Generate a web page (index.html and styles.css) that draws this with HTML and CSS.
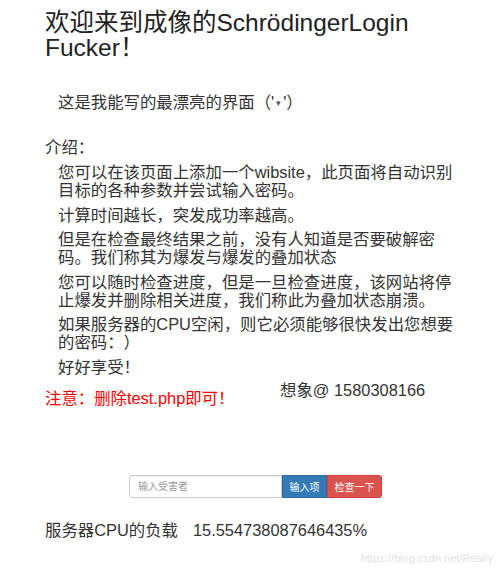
FILE: index.html
```html
<!DOCTYPE html>
<html lang="zh">
<head>
<meta charset="utf-8">
<title>SchrödingerLogin Fucker</title>
<link rel="stylesheet" href="styles.css">
</head>
<body>
<div class="page">
  <h1 class="title">欢迎来到成像的SchrödingerLogin Fucker！</h1>
  <p class="tagline">这是我能写的最漂亮的界面<span class="cjk">（</span>'<span class="face">▾</span>'<span class="cjk">）</span></p>
  <p class="intro-label">介绍：</p>
  <div class="intro">
    <p>您可以在该页面上添加一个wibsite，此页面将自动识别目标的各种参数并尝试输入密码。</p>
    <p>计算时间越长，突发成功率越高。</p>
    <p>但是在检查最终结果之前，没有人知道是否要破解密码。我们称其为爆发与爆发的叠加状态</p>
    <p>您可以随时检查进度，但是一旦检查进度，该网站将停止爆发并删除相关进度，我们称此为叠加状态崩溃。</p>
    <p>如果服务器的CPU空闲，则它必须能够很快发出您想要的密码：）</p>
    <p>好好享受！</p>
  </div>
  <div class="notes">
    <span class="notice">注意：删除test.php即可！</span>
    <span class="author">想象@ 1580308166</span>
  </div>
  <form class="input-group">
    <input class="field" type="text" placeholder="输入受害者">
    <button class="btn btn-blue" type="button">输入项</button>
    <button class="btn btn-red" type="button">检查一下</button>
  </form>
  <p class="cpu"><span>服务器CPU的负载</span><span class="cpu-value">15.554738087646435%</span></p>
</div>
<div class="watermark">https://blog.csdn.net/Realiy</div>
</body>
</html>
```

FILE: styles.css
```css
html, body {
  margin: 0;
  padding: 0;
  background: #fff;
}
body {
  font-family: "Liberation Sans", "Noto Sans CJK SC", sans-serif;
  color: #333;
  font-size: 16.4px;
  line-height: 18px;
  width: 500px;
  height: 571px;
  position: relative;
  overflow: hidden;
  text-spacing-trim: space-all;
}
.page {
  padding: 10px 0 0 45px;
}
p {
  margin: 0;
}
.title {
  margin: 0;
  width: 400px;
  font-size: 24.5px;
  line-height: 25px;
  font-weight: normal;
  color: #222;
}
.tagline {
  margin: 32px 0 0 13px;
}
.cjk {
  display: inline-block;
  width: 1em;
  font-family: "Noto Sans CJK SC", sans-serif;
}
.cjk:first-child,
.tagline .cjk:first-of-type {
  text-align: right;
}
.tagline .cjk:last-of-type {
  text-align: left;
}
.face {
  display: inline-block;
  font-size: 9px;
  margin: 0 2px;
  vertical-align: 2px;
  color: #555;
}
.intro-label {
  margin-top: 26px;
}
.intro {
  margin: 7px 0 0 13px;
  width: 400px;
  display: flex;
  flex-direction: column;
  gap: 6.6px;
}
.notes {
  display: flex;
  align-items: flex-start;
  margin-top: 5px;
}
.notice {
  color: #f00;
  width: 235px;
  margin-top: 8px;
}
.author {
  color: #333;
}
.input-group {
  display: flex;
  margin: 68px 0 0 84px;
  height: 23px;
}
.field {
  box-sizing: border-box;
  width: 153px;
  height: 23px;
  margin: 0;
  padding: 0 8px;
  border: 1px solid #ccc;
  border-radius: 3px 0 0 3px;
  box-shadow: inset 0 1px 1px rgba(0,0,0,0.075);
  font-family: "Liberation Sans", "Noto Sans CJK SC", sans-serif;
  font-size: 10px;
  color: #555;
  outline: none;
}
.field::placeholder {
  color: #999;
}
.btn {
  box-sizing: border-box;
  height: 23px;
  margin: 0;
  padding: 0;
  border: 1px solid transparent;
  font-family: "Liberation Sans", "Noto Sans CJK SC", sans-serif;
  font-size: 10px;
  color: #fff;
  cursor: pointer;
}
.btn-blue {
  width: 45px;
  background: #337ab7;
  border-color: #2e6da4;
}
.btn-red {
  width: 55px;
  background: #d9534f;
  border-color: #d43f3a;
  border-radius: 0 3px 3px 0;
}
.cpu {
  margin-top: 23px;
  display: flex;
}
.cpu-value {
  margin-left: 15px;
}
.watermark {
  position: absolute;
  right: 7px;
  top: 551px;
  font-size: 11px;
  line-height: 14px;
  color: #e2e2e2;
}
```
